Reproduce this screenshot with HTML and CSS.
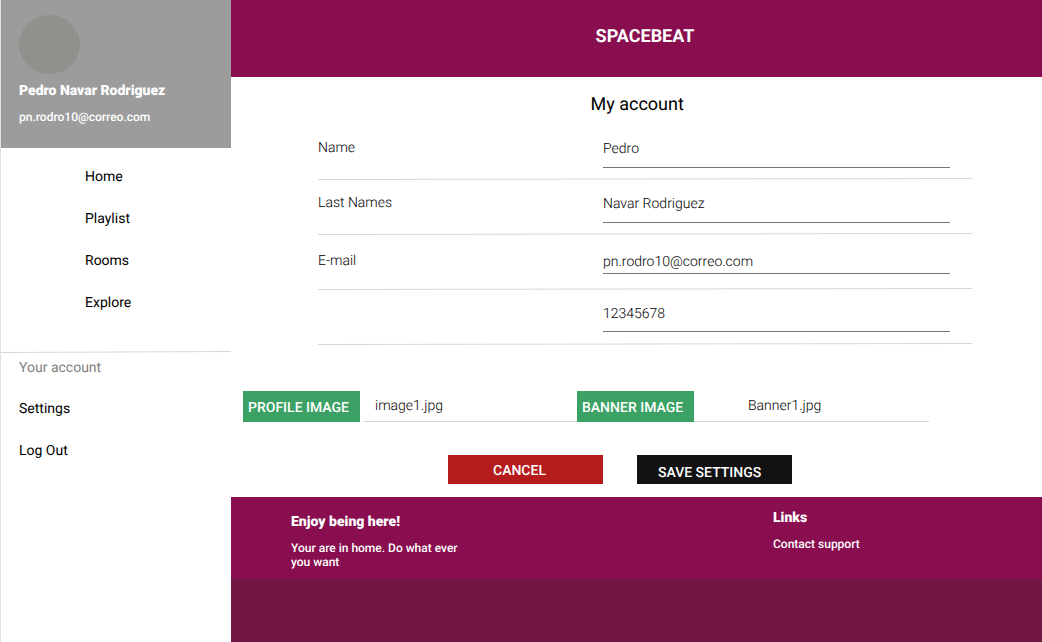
FILE: index.html
```html
<!DOCTYPE html>
<html lang="en">
<head>
<meta charset="utf-8">
<title>Spacebeat - My account</title>
<link rel="stylesheet" href="styles.css">
</head>
<body>
<div class="app">
  <aside class="sidebar">
    <div class="profile">
      <div class="avatar"></div>
      <div class="profile-name">Pedro Navar Rodriguez</div>
      <div class="profile-mail">pn.rodro10@correo.com</div>
    </div>
    <nav class="menu">
      <a>Home</a><a>Playlist</a><a>Rooms</a><a>Explore</a>
    </nav>
    <svg class="rule" viewBox="0 0 230 2"><line x1="0" y1="1.5" x2="230" y2="0.5"/></svg>
    <nav class="account">
      <span class="account-title">Your account</span>
      <a>Settings</a><a>Log Out</a>
    </nav>
  </aside>
  <div class="page">
    <header class="topbar">SPACEBEAT</header>
    <main class="content">
      <h1 class="title">My account</h1>
      <form class="form">
        <div class="row"><label class="label">Name</label><div class="field">Pedro</div></div>
        <svg class="rule" viewBox="0 0 654 2"><line x1="0" y1="1.5" x2="654" y2="0.5"/></svg>
        <div class="row"><label class="label">Last Names</label><div class="field">Navar Rodriguez</div></div>
        <svg class="rule" viewBox="0 0 654 2"><line x1="0" y1="1.5" x2="654" y2="0.5"/></svg>
        <div class="row row-mail"><label class="label">E-mail</label><div class="field">pn.rodro10@correo.com</div></div>
        <svg class="rule" viewBox="0 0 654 2"><line x1="0" y1="1.5" x2="654" y2="0.5"/></svg>
        <div class="row row-pass"><label class="label"></label><div class="field">12345678</div></div>
        <svg class="rule" viewBox="0 0 654 2"><line x1="0" y1="1.5" x2="654" y2="0.5"/></svg>
      </form>
      <div class="uploads">
        <div class="upload-btn">PROFILE IMAGE</div>
        <div class="file file-profile">image1.jpg</div>
        <div class="upload-btn">BANNER IMAGE</div>
        <div class="file file-banner">Banner1.jpg</div>
      </div>
      <div class="actions">
        <div class="btn cancel">CANCEL</div>
        <div class="btn save">SAVE SETTINGS</div>
      </div>
    </main>
    <footer class="footer">
      <div class="footer-main">
        <section class="about">
          <h2 class="foot-title">Enjoy being here!</h2>
          <p class="foot-text">Your are in home. Do what ever<br>you want</p>
        </section>
        <section class="links">
          <h2 class="foot-title">Links</h2>
          <p class="foot-text">Contact support</p>
        </section>
      </div>
      <div class="footer-bottom"></div>
    </footer>
  </div>
</div>
</body>
</html>
```
FILE: styles.css
```css
* { box-sizing: border-box; margin: 0; }
body { background: #fff; color: #000; font: 400 14px/18px Roboto, sans-serif; text-rendering: geometricPrecision; }
.app { display: flex; width: 1042px; height: 642px; overflow: hidden; }
.sidebar { width: 231px; border-left: 1px solid #e2e2e2; }
.profile { height: 148px; padding: 15px 0 0 18px; background: #9c9c9c; color: #fff; }
.avatar { width: 61px; height: 59px; border-radius: 50%; background: #92908d; }
.profile-name { margin-top: 8px; font-weight: 900; }
.profile-mail { margin-top: 10px; font-size: 12px; line-height: 14px; font-weight: 500; }
.menu { display: flex; flex-direction: column; gap: 24px; height: 203px; padding: 20px 0 0 84px; }
.rule { display: block; width: 100%; height: 2px; stroke: #d8d8d8; stroke-width: 1; }
.account { display: flex; flex-direction: column; gap: 24px; padding: 6px 0 0 18px; }
.account-title { margin-bottom: -1px; color: #808080; }
.page { display: flex; flex-direction: column; width: 811px; }
.topbar { height: 77px; padding: 26px 0 0 17px; background: #880e4f; color: #fff; text-align: center; font-size: 18px; line-height: 21px; font-weight: 700; }
.content { height: 420px; }
.title { padding: 17px 0 0 359.5px; font-size: 18px; line-height: 21px; font-weight: 400; }
.form { width: 654px; margin: 10px 0 0 87px; font-weight: 300; }
.row { display: flex; height: 53px; }
.label { width: 285px; padding-top: 14px; }
.field { width: 347px; height: 43px; padding-top: 15px; border-bottom: 1px solid #757575; }
.row-mail .label { padding-top: 17px; }
.row-mail .field { height: 39px; padding-top: 18px; }
.row-pass .field { height: 42px; }
.uploads { display: flex; margin: 46px 0 0 12px; height: 31px; }
.upload-btn { width: 117px; padding: 8px 0 0 5px; background: #3ba164; color: #fff; font-weight: 500; }
.file { padding-top: 6px; height: 31px; border-bottom: 1px solid #d4d4d4; font-weight: 300; }
.file-profile { width: 213px; margin-left: 4px; padding-left: 11px; }
.file-banner { width: 235px; padding-left: 54px; }
.actions { display: flex; gap: 34px; margin: 33px 0 0 217px; }
.btn { width: 155px; height: 29px; color: #fff; font-weight: 500; }
.cancel { padding: 7px 0 0 45px; background: #b71c1c; }
.save { padding: 9px 0 0 21px; background: #121212; }
.footer { height: 145px; color: #fff; }
.footer-main { display: flex; height: 82px; padding-left: 60px; background: #880e4f; }
.about { width: 482px; padding-top: 16px; }
.links { padding-top: 12px; }
.foot-title { font-size: 14px; line-height: 18px; font-weight: 900; }
.foot-text { margin-top: 10px; font-size: 12px; line-height: 14px; font-weight: 500; }
.footer-bottom { height: 63px; background: #721645; }
```
